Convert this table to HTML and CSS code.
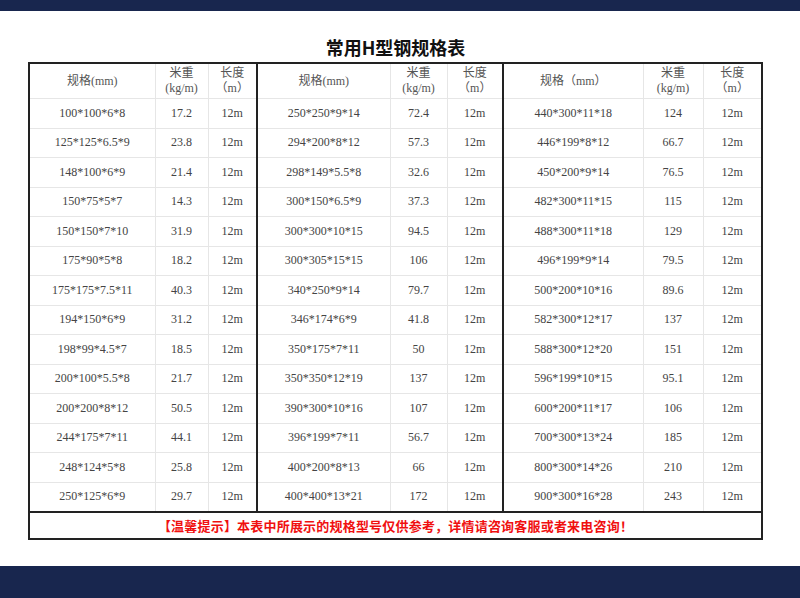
FILE: index.html
```html
<!DOCTYPE html>
<html lang="zh-CN">
<head>
<meta charset="utf-8">
<title>常用H型钢规格表</title>
<link rel="stylesheet" href="styles.css">
</head>
<body>
<div class="topbar"></div>
<div class="page">
  <h1 class="title">常用H型钢规格表</h1>
  <table class="spec">
    <colgroup>
      <col class="c1"><col class="c2"><col class="c3">
      <col class="c4"><col class="c5"><col class="c6">
      <col class="c7"><col class="c8"><col class="c9">
    </colgroup>
    <thead>
      <tr>
        <th>规格(mm)</th><th>米重<br>(kg/m)</th><th>长度<br>（m）</th>
        <th class="sep">规格(mm)</th><th>米重<br>(kg/m)</th><th>长度<br>（m）</th>
        <th class="sep">规格（mm）</th><th>米重<br>(kg/m)</th><th>长度<br>（m）</th>
      </tr>
    </thead>
    <tbody>
      <tr><td>100*100*6*8</td><td>17.2</td><td>12m</td><td class="sep">250*250*9*14</td><td>72.4</td><td>12m</td><td class="sep">440*300*11*18</td><td>124</td><td>12m</td></tr>
      <tr><td>125*125*6.5*9</td><td>23.8</td><td>12m</td><td class="sep">294*200*8*12</td><td>57.3</td><td>12m</td><td class="sep">446*199*8*12</td><td>66.7</td><td>12m</td></tr>
      <tr><td>148*100*6*9</td><td>21.4</td><td>12m</td><td class="sep">298*149*5.5*8</td><td>32.6</td><td>12m</td><td class="sep">450*200*9*14</td><td>76.5</td><td>12m</td></tr>
      <tr><td>150*75*5*7</td><td>14.3</td><td>12m</td><td class="sep">300*150*6.5*9</td><td>37.3</td><td>12m</td><td class="sep">482*300*11*15</td><td>115</td><td>12m</td></tr>
      <tr><td>150*150*7*10</td><td>31.9</td><td>12m</td><td class="sep">300*300*10*15</td><td>94.5</td><td>12m</td><td class="sep">488*300*11*18</td><td>129</td><td>12m</td></tr>
      <tr><td>175*90*5*8</td><td>18.2</td><td>12m</td><td class="sep">300*305*15*15</td><td>106</td><td>12m</td><td class="sep">496*199*9*14</td><td>79.5</td><td>12m</td></tr>
      <tr><td>175*175*7.5*11</td><td>40.3</td><td>12m</td><td class="sep">340*250*9*14</td><td>79.7</td><td>12m</td><td class="sep">500*200*10*16</td><td>89.6</td><td>12m</td></tr>
      <tr><td>194*150*6*9</td><td>31.2</td><td>12m</td><td class="sep">346*174*6*9</td><td>41.8</td><td>12m</td><td class="sep">582*300*12*17</td><td>137</td><td>12m</td></tr>
      <tr><td>198*99*4.5*7</td><td>18.5</td><td>12m</td><td class="sep">350*175*7*11</td><td>50</td><td>12m</td><td class="sep">588*300*12*20</td><td>151</td><td>12m</td></tr>
      <tr><td>200*100*5.5*8</td><td>21.7</td><td>12m</td><td class="sep">350*350*12*19</td><td>137</td><td>12m</td><td class="sep">596*199*10*15</td><td>95.1</td><td>12m</td></tr>
      <tr><td>200*200*8*12</td><td>50.5</td><td>12m</td><td class="sep">390*300*10*16</td><td>107</td><td>12m</td><td class="sep">600*200*11*17</td><td>106</td><td>12m</td></tr>
      <tr><td>244*175*7*11</td><td>44.1</td><td>12m</td><td class="sep">396*199*7*11</td><td>56.7</td><td>12m</td><td class="sep">700*300*13*24</td><td>185</td><td>12m</td></tr>
      <tr><td>248*124*5*8</td><td>25.8</td><td>12m</td><td class="sep">400*200*8*13</td><td>66</td><td>12m</td><td class="sep">800*300*14*26</td><td>210</td><td>12m</td></tr>
      <tr><td>250*125*6*9</td><td>29.7</td><td>12m</td><td class="sep">400*400*13*21</td><td>172</td><td>12m</td><td class="sep">900*300*16*28</td><td>243</td><td>12m</td></tr>
    </tbody>
    <tfoot>
      <tr><td colspan="9" class="note">【温馨提示】本表中所展示的规格型号仅供参考，详情请咨询客服或者来电咨询！</td></tr>
    </tfoot>
  </table>
</div>
<div class="bottombar"></div>
</body>
</html>
```

FILE: styles.css
```css
html, body {
  margin: 0;
  padding: 0;
}
body {
  background: #ffffff;
  height: 598px;
  display: flex;
  flex-direction: column;
  font-family: "Liberation Serif", "Noto Sans CJK SC", serif;
  color: #333333;
}
.topbar {
  height: 11px;
  background: #18264e;
  flex: none;
}
.bottombar {
  height: 32px;
  background: #18264e;
  margin-top: auto;
  flex: none;
}
.page {
  width: 735px;
  margin-left: 28px;
}
.title {
  margin: 0;
  height: 51px;
  box-sizing: border-box;
  display: flex;
  align-items: flex-end;
  justify-content: center;
  padding-bottom: 4px;
  font-family: "Noto Sans CJK SC", sans-serif;
  font-weight: 700;
  font-size: 18px;
  line-height: 22px;
  color: #111111;
}
.spec {
  width: 735px;
  border-collapse: collapse;
  table-layout: fixed;
  border: 2px solid #222222;
}
.c1 { width: 126px; }
.c2 { width: 53px; }
.c3 { width: 49px; }
.c4 { width: 133px; }
.c5 { width: 57px; }
.c6 { width: 56px; }
.c7 { width: 140px; }
.c8 { width: 60px; }
.c9 { width: 59px; }
.spec th,
.spec td {
  border: 1px solid #e6e6e6;
  padding: 0;
  text-align: center;
  font-size: 12px;
  font-weight: 400;
  color: #444444;
}
.spec th {
  height: 34px;
  line-height: 15px;
  color: #555555;
}
.spec td {
  height: 28.5px;
}
.spec .sep {
  border-left: 2px solid #222222;
}
.spec .note {
  border-top: 2px solid #222222;
  height: 25px;
  font-family: "Noto Sans CJK SC", sans-serif;
  font-weight: 700;
  font-size: 13px;
  letter-spacing: 0.2px;
  color: #f01010;
}
```
